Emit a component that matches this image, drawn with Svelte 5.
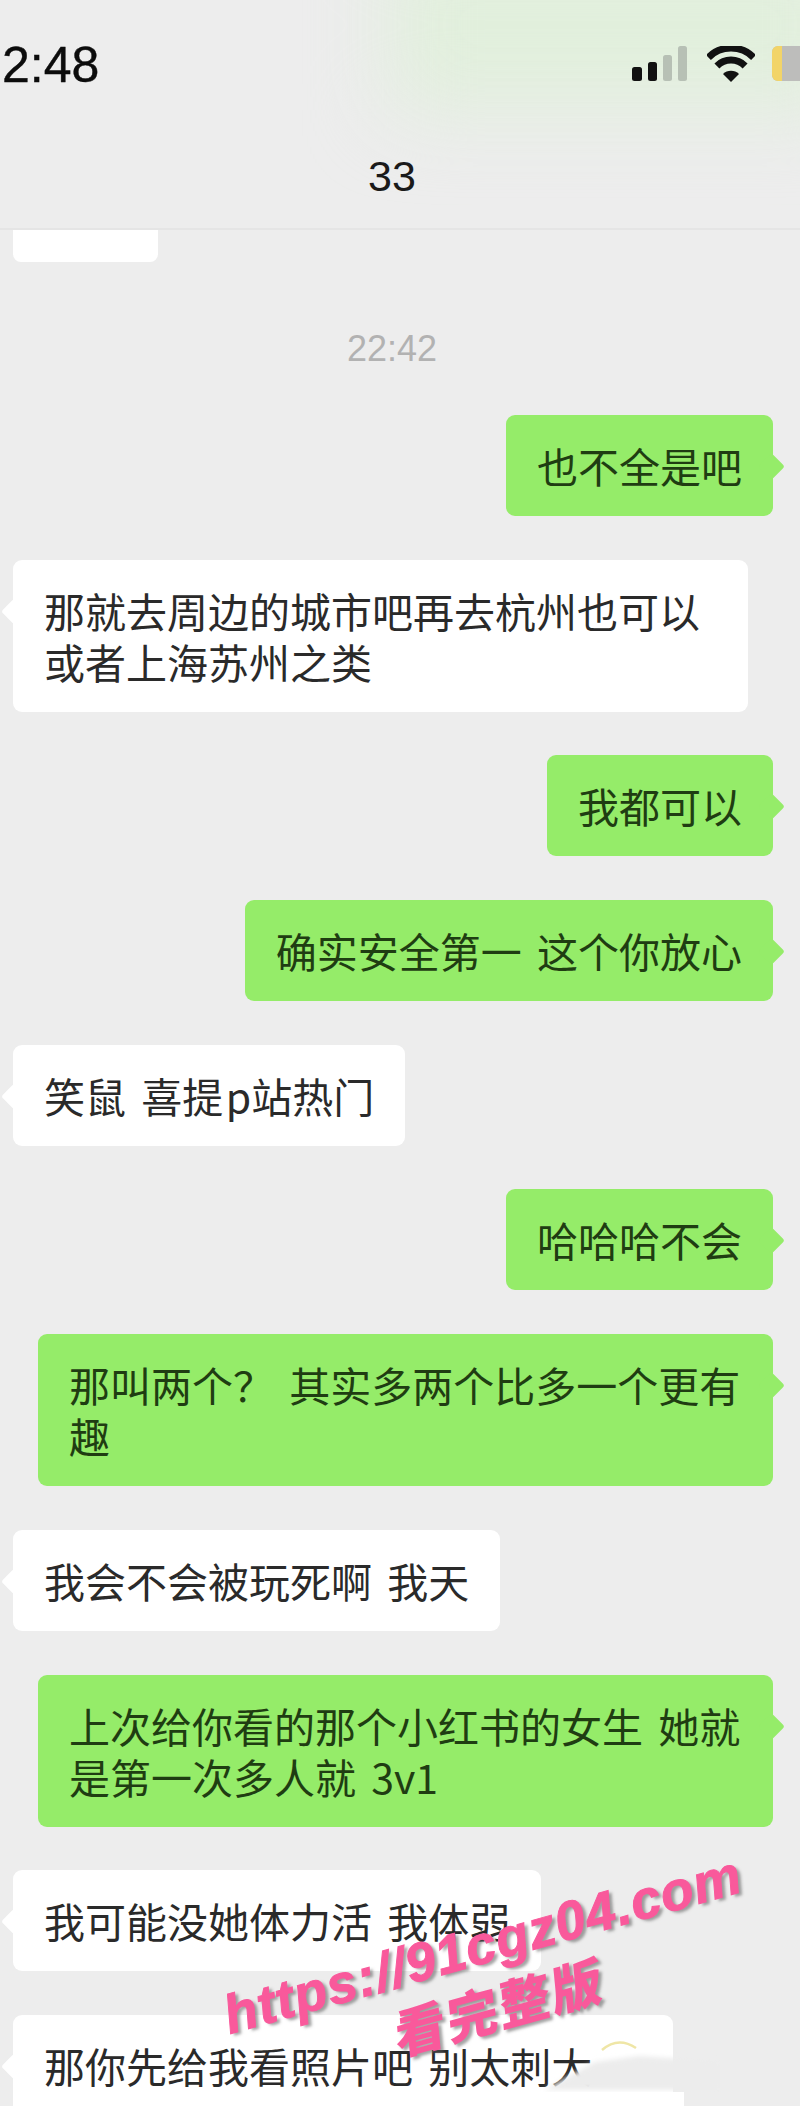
<script lang="ts">
	type Message = { side: "in" | "out"; text: string; last?: boolean };

	const messages: Message[] = [
		{ side: "out", text: "也不全是吧" },
		{ side: "in", text: "那就去周边的城市吧再去杭州也可以或者上海苏州之类" },
		{ side: "out", text: "我都可以" },
		{ side: "out", text: "确实安全第一 这个你放心" },
		{ side: "in", text: "笑鼠 喜提\u200Ap站热门" },
		{ side: "out", text: "哈哈哈不会" },
		{ side: "out", text: "那叫两个？ 其实多两个比多一个更有趣" },
		{ side: "in", text: "我会不会被玩死啊 我天" },
		{ side: "out", text: "上次给你看的那个小红书的女生 她就是第一次多人就 3v1" },
		{ side: "in", text: "我可能没她体力活 我体弱" },
		{ side: "in", text: "那你先给我看照片吧 别太刺大", last: true },
	];
</script>

<div class="phone">
	<header class="top">
		<div class="wash"></div>
		<div class="status">
			<span class="clock">2:48</span>
			<div class="icons">
				<svg class="signal" width="55" height="35" viewBox="0 0 55 35">
					<rect x="0" y="21" width="10" height="14" rx="2.5" fill="#111" />
					<rect x="16" y="16" width="9" height="19" rx="2.5" fill="#111" />
					<rect x="31" y="9" width="9" height="26" rx="2.5" fill="#b7c0b5" />
					<rect x="46" y="0" width="9" height="35" rx="2.5" fill="#b7c0b5" />
				</svg>
				<svg class="wifi" width="48" height="36" viewBox="0 0 48 36">
					<path d="M1.4 11.4a32 32 0 0 1 45.2 0" fill="none" stroke="#111" stroke-width="7" />
					<path d="M9.9 19.9a20 20 0 0 1 28.2 0" fill="none" stroke="#111" stroke-width="7" />
					<path d="M24 36 L16 28 a11.3 11.3 0 0 1 16 0 Z" fill="#111" />
				</svg>
				<div class="battery"><div class="charge"></div></div>
			</div>
		</div>
		<div class="title">33</div>
	</header>

	<main class="chat">
		<div class="stub"></div>
		<div class="time">22:42</div>
		<div class="list">
			{#each messages as m}
				<div class="row {m.side}">
					<div class="bubble" class:last={m.last}>{m.text}</div>
				</div>
			{/each}
		</div>
	</main>

	<!-- smudge over the last bubble -->
	<svg class="smudge" width="340" height="116" viewBox="0 0 340 116">
		<defs>
			<filter id="soft"><feGaussianBlur stdDeviation="2.5" /></filter>
		</defs>
		<path d="M164 100 L215 72 L260 66 L340 72 L340 100 Z" fill="#ececec" filter="url(#soft)" />
		<rect x="150" y="102" width="154" height="14" fill="#fff" />
		<path d="M222 60 q16 -14 34 -2" fill="none" stroke="#efe6a6" stroke-width="2.5" />
	</svg>

	<div class="stamp">
		<div class="url">https://91cgz04.com</div>
		<div class="cta">看完整版</div>
	</div>
</div>

<style>
	:global(body) {
		margin: 0;
		background: #ededed;
	}

	.phone {
		position: relative;
		height: 2106px;
		overflow: hidden;
		background: #ededed;
		font-family: "Liberation Sans", "Noto Sans CJK SC", sans-serif;
	}

	.top {
		position: relative;
		height: 230px;
		border-bottom: 2px solid #e5e5e5;
		box-sizing: border-box;
		overflow: hidden;
	}

	.wash {
		position: absolute;
		left: 390px;
		top: -60px;
		width: 460px;
		height: 170px;
		background: #e1efdc;
		filter: blur(40px);
	}

	.status {
		position: relative;
		display: flex;
		justify-content: space-between;
		align-items: flex-start;
		padding: 38px 0 0 2px;
		height: 54px;
	}

	.clock {
		font-size: 50px;
		line-height: 54px;
		color: #0c0c0c;
		-webkit-text-stroke: 0.4px #0c0c0c;
	}

	.icons {
		display: flex;
		align-items: flex-start;
		padding-top: 8px;
	}

	.signal {
		margin-right: 20px;
	}

	.wifi {
		margin-right: 17px;
	}

	.battery {
		width: 28px;
		height: 35px;
		background: #bdbdbb;
		border-radius: 6px 0 0 6px;
		overflow: hidden;
	}

	.charge {
		width: 10px;
		height: 100%;
		background: #f2d468;
	}

	.title {
		position: relative;
		margin-top: 60px;
		padding-right: 16px;
		text-align: center;
		font-size: 43px;
		line-height: 48px;
		color: #1a1a1a;
	}

	.stub {
		width: 145px;
		height: 32px;
		margin-left: 13px;
		background: #fff;
		border-radius: 0 0 8px 8px;
	}

	.time {
		margin-top: 64px;
		padding-right: 16px;
		text-align: center;
		font-size: 36px;
		line-height: 46px;
		color: #b2b2b2;
	}

	.list {
		display: flex;
		flex-direction: column;
		gap: 43.7px;
		margin-top: 43px;
	}

	.row {
		display: flex;
	}

	.row.out {
		justify-content: flex-end;
		padding-right: 27px;
	}

	.row.in {
		padding-left: 13px;
	}

	.bubble {
		position: relative;
		box-sizing: border-box;
		max-width: 735px;
		padding: 25px 31px;
		border-radius: 9px;
		font-family: "Noto Sans CJK SC", "Liberation Sans", sans-serif;
		font-size: 41px;
		font-weight: 400;
		line-height: 51px;
		word-spacing: 6px;
	}

	.bubble.last {
		width: 660px;
	}

	.bubble::after {
		content: "";
		position: absolute;
		top: 42px;
		width: 19px;
		height: 19px;
		border-radius: 3px;
		background: inherit;
		transform: rotate(45deg);
	}

	.out .bubble {
		background: #95ec69;
		color: #1f3d12;
	}

	.out .bubble::after {
		right: -8px;
	}

	.in .bubble {
		background: #fff;
		color: #2a2a2a;
	}

	.in .bubble::after {
		left: -8px;
	}

	.smudge {
		position: absolute;
		left: 380px;
		top: 1990px;
	}

	/* watermark sits over the chat */
	.stamp {
		position: absolute;
		left: 216px;
		top: 1912px;
		width: 550px;
		text-align: center;
		color: #f9599b;
		font-weight: 700;
		text-shadow: 3px 3px 3px rgba(90, 90, 90, 0.55);
		transform: rotate(-15.5deg);
	}

	.url {
		font-family: "Liberation Sans", sans-serif;
		font-style: italic;
		font-size: 54px;
		line-height: 62px;
		letter-spacing: 1px;
		white-space: nowrap;
		-webkit-text-stroke: 1px #f9599b;
	}

	.cta {
		font-family: "Noto Sans CJK SC", sans-serif;
		font-size: 52px;
		font-weight: 900;
		line-height: 64px;
		letter-spacing: 2px;
		transform: skewX(-10deg);
	}
</style>
